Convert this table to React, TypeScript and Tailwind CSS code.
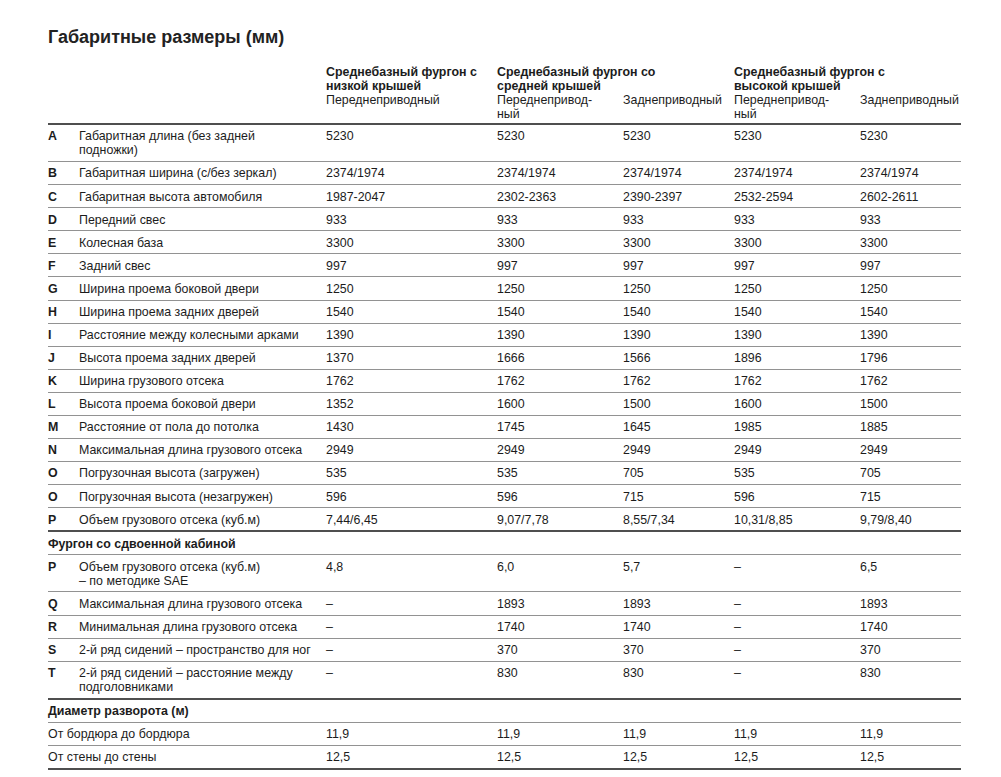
import type { ReactNode } from 'react';

type Row = {
  code?: string;
  label: ReactNode;
  values: string[];
  thick?: boolean;
};

const grid = 'grid grid-cols-[31px_247px_171px_126px_111px_126px_101px]';

const mainRows: Row[] = [
  { code: 'A', label: <>Габаритная длина (без задней<br />подножки)</>, values: ['5230', '5230', '5230', '5230', '5230'] },
  { code: 'B', label: 'Габаритная ширина (с/без зеркал)', values: ['2374/1974', '2374/1974', '2374/1974', '2374/1974', '2374/1974'] },
  { code: 'C', label: 'Габаритная высота автомобиля', values: ['1987-2047', '2302-2363', '2390-2397', '2532-2594', '2602-2611'] },
  { code: 'D', label: 'Передний свес', values: ['933', '933', '933', '933', '933'] },
  { code: 'E', label: 'Колесная база', values: ['3300', '3300', '3300', '3300', '3300'] },
  { code: 'F', label: 'Задний свес', values: ['997', '997', '997', '997', '997'] },
  { code: 'G', label: 'Ширина проема боковой двери', values: ['1250', '1250', '1250', '1250', '1250'] },
  { code: 'H', label: 'Ширина проема задних дверей', values: ['1540', '1540', '1540', '1540', '1540'] },
  { code: 'I', label: 'Расстояние между колесными арками', values: ['1390', '1390', '1390', '1390', '1390'] },
  { code: 'J', label: 'Высота проема задних дверей', values: ['1370', '1666', '1566', '1896', '1796'] },
  { code: 'K', label: 'Ширина грузового отсека', values: ['1762', '1762', '1762', '1762', '1762'] },
  { code: 'L', label: 'Высота проема боковой двери', values: ['1352', '1600', '1500', '1600', '1500'] },
  { code: 'M', label: 'Расстояние от пола до потолка', values: ['1430', '1745', '1645', '1985', '1885'] },
  { code: 'N', label: 'Максимальная длина грузового отсека', values: ['2949', '2949', '2949', '2949', '2949'] },
  { code: 'O', label: 'Погрузочная высота (загружен)', values: ['535', '535', '705', '535', '705'] },
  { code: 'O', label: 'Погрузочная высота (незагружен)', values: ['596', '596', '715', '596', '715'] },
  { code: 'P', label: 'Объем грузового отсека (куб.м)', values: ['7,44/6,45', '9,07/7,78', '8,55/7,34', '10,31/8,85', '9,79/8,40'], thick: true },
];

const crewRows: Row[] = [
  { code: 'P', label: <>Объем грузового отсека (куб.м)<br />– по методике SAE</>, values: ['4,8', '6,0', '5,7', '–', '6,5'] },
  { code: 'Q', label: 'Максимальная длина грузового отсека', values: ['–', '1893', '1893', '–', '1893'] },
  { code: 'R', label: 'Минимальная длина грузового отсека', values: ['–', '1740', '1740', '–', '1740'] },
  { code: 'S', label: '2-й ряд сидений – пространство для ног', values: ['–', '370', '370', '–', '370'] },
  { code: 'T', label: <>2-й ряд сидений – расстояние между<br />подголовниками</>, values: ['–', '830', '830', '–', '830'], thick: true },
];

const turnRows: Row[] = [
  { label: 'От бордюра до бордюра', values: ['11,9', '11,9', '11,9', '11,9', '11,9'] },
  { label: 'От стены до стены', values: ['12,5', '12,5', '12,5', '12,5', '12,5'], thick: true },
];

function DataRow({ row }: { row: Row }) {
  const border = row.thick ? 'border-b-2 border-[#4f4f4f]' : 'border-b border-[#929292]';
  return (
    <div className={`${grid} ${border} pt-[4.4px] pb-[3.7px]`}>
      {row.code ? (
        <>
          <div className="font-bold">{row.code}</div>
          <div>{row.label}</div>
        </>
      ) : (
        <div className="col-span-2">{row.label}</div>
      )}
      {row.values.map((v, i) => (
        <div key={i}>{v}</div>
      ))}
    </div>
  );
}

function SectionRow({ title }: { title: string }) {
  return (
    <div className="border-b border-[#929292] pt-[4.4px] pb-[3.7px] font-bold">{title}</div>
  );
}

export default function App() {
  return (
    <div className="min-h-screen bg-white pl-[48px] pt-[26px] text-[#1c1c1c] font-['Liberation_Sans',Arial,sans-serif]">
      <h1 className="text-[18px] leading-[22px] font-bold text-[#222]">Габаритные размеры (мм)</h1>

      <div className="w-[913px] mt-[17px] text-[12.4px] leading-[14px]">
        <div className={`${grid} border-b-2 border-[#4f4f4f] pb-[2px]`}>
          <div className="col-start-3 font-bold">
            Среднебазный фургон с<br />низкой крышей
          </div>
          <div className="col-span-2 font-bold">
            Среднебазный фургон со<br />средней крышей
          </div>
          <div className="col-span-2 font-bold">
            Среднебазный фургон с<br />высокой крышей
          </div>
          <div className="col-start-3">Переднеприводный</div>
          <div>
            Переднепривод-<br />ный
          </div>
          <div>Заднеприводный</div>
          <div>
            Переднепривод-<br />ный
          </div>
          <div>Заднеприводный</div>
        </div>

        {mainRows.map((r, i) => (
          <DataRow key={'m' + i} row={r} />
        ))}

        <SectionRow title="Фургон со сдвоенной кабиной" />
        {crewRows.map((r, i) => (
          <DataRow key={'c' + i} row={r} />
        ))}

        <SectionRow title="Диаметр разворота (м)" />
        {turnRows.map((r, i) => (
          <DataRow key={'t' + i} row={r} />
        ))}
      </div>
    </div>
  );
}
